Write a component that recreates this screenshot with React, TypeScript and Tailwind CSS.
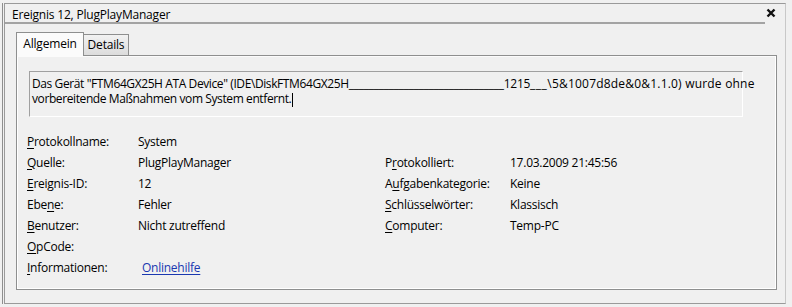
import React from "react";

const U = ({ children }: { children: React.ReactNode }) => <span className="underline underline-offset-[2px]">{children}</span>;

export default function App() {
  const rows: { l: React.ReactNode; v: React.ReactNode; rl?: React.ReactNode; rv?: React.ReactNode }[] = [
    { l: <><U>P</U>rotokollname:</>, v: "System" },
    { l: <><U>Q</U>uelle:</>, v: "PlugPlayManager", rl: <>P<U>r</U>otokolliert:</>, rv: "17.03.2009 21:45:56" },
    { l: <><U>E</U>reignis-ID:</>, v: "12", rl: <>A<U>u</U>fgabenkategorie:</>, rv: "Keine" },
    { l: <>Ebe<U>n</U>e:</>, v: "Fehler", rl: <><U>S</U>chlüsselwörter:</>, rv: "Klassisch" },
    { l: <><U>B</U>enutzer:</>, v: "Nicht zutreffend", rl: <><U>C</U>omputer:</>, rv: "Temp-PC" },
    { l: <><U>O</U>pCode:</>, v: "" },
    {
      l: <><U>I</U>nformationen:</>,
      v: <span className="pl-[4px] text-[#1a38b0] underline underline-offset-[2px]">Onlinehilfe</span>,
    },
  ];

  return (
    <div
      className="w-[792px] h-[307px] bg-[#f0f0f0] text-[12px] text-black overflow-hidden"
      style={{ fontFamily: '"Open Sans", "Noto Sans", sans-serif' }}
    >
      <div className="pl-[2px] pt-[3px]">
        <div className="w-[784px] h-[301px] border-l border-[#8e8e8e] pl-[1px]">
          <div className="h-full border-l border-t border-b border-r border-l-[#9a9a9a] border-t-[#9a9a9a] border-b-[#9a9a9a] border-r-[#c8c8c8] flex flex-col">
            {/* header */}
            <div className="flex items-center h-[20px] pt-[4px] pl-[7px] pr-[12px] mr-[20px] border-b-2 border-[#a3a3a3]">
              <span className="leading-none tracking-[-0.2px]">Ereignis 12, PlugPlayManager</span>
            </div>
            <div className="relative">
              <svg className="absolute left-[761px] top-[-16px]" width="10" height="10" viewBox="0 0 10 10">
                <path d="M1.5 1.5 L8.5 8.5 M8.5 1.5 L1.5 8.5" stroke="#111" strokeWidth="2.4" />
              </svg>
            </div>
            {/* tabs */}
            <div className="flex items-end pl-[11px] mt-[7px] h-[24px]">
              <div className="h-[24px] w-[68px] bg-[#fbfbfb] border border-b-0 border-[#8e8f8f] flex items-center justify-center relative z-10 mb-[-1px] pb-[1px]">
                <span className="tracking-[-0.2px]">Allgemein</span>
              </div>
              <div className="h-[21px] w-[45px] bg-gradient-to-b from-[#f2f2f2] to-[#dcdcdc] border border-l-0 border-b-0 border-[#8e8f8f] flex items-center justify-center">
                <span className="tracking-[-0.2px]">Details</span>
              </div>
            </div>
            {/* panel */}
            <div className="ml-[11px] w-[761px] h-[235px] border border-[#8e8f8f]">
              <div className="h-full border border-white border-t-[#fbfbfb] bg-[#f0f0f0] pl-[9px] pt-[14px]">
                <div className="ml-[2px] w-[714px] h-[46px] border border-t-[#a0a0a0] border-l-[#a0a0a0] border-b-[#ffffff] border-r-[#ffffff] pl-[2px] pt-[4px] leading-[15px] whitespace-nowrap">
                  <span className="tracking-[-0.4px]">Das Gerät "FTM64GX25H ATA Device" (IDE\DiskFTM64GX25H</span>
                  <span className="tracking-[-0.25px]">_______________________________</span>
                  <span className="tracking-[-0.3px]">1215</span>
                  <span className="tracking-[0.5px]">___</span>
                  <span className="tracking-[0.2px]">\5&amp;1007d8de&amp;0&amp;1.1.0) wurde ohne</span>
                  <br />
                  <span className="tracking-[-0.4px]">vorbereitende Maßnahmen vom System entfernt.</span>
                  <span className="inline-block w-px h-[14px] bg-black align-middle ml-[1px]" />
                </div>
                <div className="mt-[14px] grid grid-cols-[111px_247px_125px_1fr] auto-rows-[21px] items-center tracking-[-0.25px]">
                  {rows.map((r, i) => (
                    <React.Fragment key={i}>
                      <div>{r.l}</div>
                      <div>{r.v}</div>
                      <div>{r.rl ?? ""}</div>
                      <div>{r.rv ?? ""}</div>
                    </React.Fragment>
                  ))}
                </div>
              </div>
            </div>
          </div>
        </div>
      </div>
    </div>
  );
}
